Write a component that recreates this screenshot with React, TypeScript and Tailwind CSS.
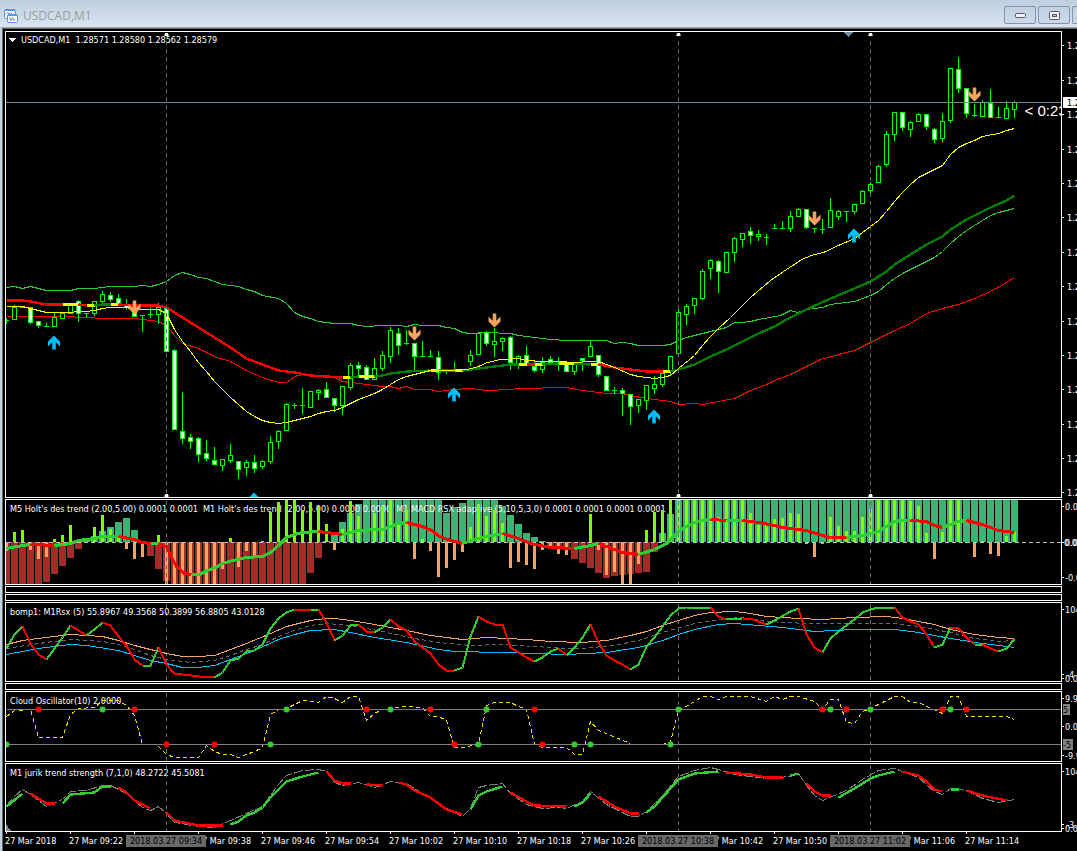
import type { ReactNode } from "react";

type Candle = ["h" | "b" | "d", number, number, number, number];
type Segment = [string, string];

const barX = (index: number) => 6 + index * 8;

const LIME = "#32cd32";
const RED = "#ff0000";
const YELLOW = "#ffff00";
const GREEN = "#008000";
const SKY = "#00bfff";
const SAND = "#f4a460";
const GRAY = "#808080";
const DIM = "#696969";

const GUIDES = [166, 678, 870];

// kind, body top, body bottom, high, low
const candles: Candle[] = [
  ["d", 320, 320, 318, 323], ["h", 307, 319, 305, 319], ["d", 307, 307, 307, 307], ["b", 307, 322, 307, 323],
  ["b", 321, 325, 321, 327], ["d", 326, 326, 323, 326], ["h", 317, 326, 312, 326], ["h", 313, 318, 313, 318],
  ["h", 304, 313, 304, 313], ["b", 301, 313, 300, 321], ["d", 313, 313, 313, 317], ["h", 301, 313, 301, 315],
  ["h", 294, 301, 291, 303], ["b", 295, 299, 292, 301], ["b", 298, 303, 294, 303], ["b", 304, 307, 299, 309],
  ["b", 309, 316, 309, 316], ["d", 315, 315, 315, 331], ["d", 314, 314, 307, 317], ["h", 307, 314, 303, 323],
  ["b", 308, 351, 308, 351], ["b", 350, 429, 349, 429], ["b", 431, 438, 392, 443], ["b", 437, 441, 434, 448],
  ["b", 438, 454, 437, 461], ["b", 453, 458, 440, 460], ["b", 460, 464, 447, 464], ["h", 459, 465, 459, 470],
  ["h", 455, 460, 444, 462], ["b", 461, 469, 461, 478], ["h", 462, 467, 460, 475], ["b", 462, 468, 455, 472],
  ["h", 461, 466, 460, 468], ["h", 442, 461, 436, 463], ["h", 431, 441, 430, 448], ["h", 404, 430, 403, 430],
  ["d", 405, 405, 403, 408], ["d", 405, 405, 388, 413], ["h", 391, 407, 391, 407], ["h", 390, 392, 389, 399],
  ["b", 389, 397, 382, 397], ["b", 398, 405, 398, 411], ["h", 386, 405, 386, 414], ["h", 365, 387, 363, 389],
  ["b", 365, 368, 362, 377], ["b", 367, 379, 365, 379], ["h", 368, 379, 358, 379], ["h", 355, 368, 351, 370],
  ["h", 330, 356, 327, 362], ["b", 333, 345, 328, 354], ["d", 343, 343, 330, 344], ["b", 343, 356, 343, 369],
  ["d", 356, 356, 341, 356], ["d", 356, 356, 350, 356], ["b", 357, 372, 351, 379], ["d", 371, 371, 370, 373],
  ["d", 369, 369, 362, 369], ["d", 369, 369, 369, 369], ["h", 355, 361, 350, 365], ["h", 333, 354, 333, 354],
  ["b", 332, 343, 331, 345], ["h", 341, 344, 328, 356], ["h", 338, 341, 337, 350], ["b", 337, 362, 336, 369],
  ["h", 356, 363, 355, 368], ["b", 355, 363, 346, 363], ["b", 366, 370, 361, 371], ["h", 362, 369, 357, 372],
  ["b", 359, 362, 356, 362], ["d", 362, 362, 357, 370], ["b", 363, 371, 363, 371], ["h", 364, 371, 364, 374],
  ["b", 358, 360, 358, 370], ["h", 346, 356, 340, 356], ["b", 355, 374, 355, 376], ["b", 376, 390, 376, 390],
  ["d", 390, 390, 387, 393], ["b", 390, 393, 388, 415], ["b", 394, 406, 394, 424], ["h", 399, 405, 399, 412],
  ["h", 385, 400, 385, 409], ["h", 384, 388, 376, 393], ["h", 373, 384, 373, 386], ["h", 356, 370, 356, 375],
  ["h", 312, 353, 305, 353], ["h", 306, 314, 304, 324], ["h", 298, 305, 298, 313], ["h", 271, 298, 269, 299],
  ["h", 260, 268, 259, 278], ["b", 261, 271, 260, 292], ["h", 252, 272, 252, 272], ["h", 238, 252, 237, 261],
  ["h", 233, 239, 233, 246], ["b", 231, 235, 227, 243], ["h", 234, 236, 230, 240], ["d", 237, 237, 234, 244],
  ["d", 228, 228, 224, 228], ["d", 228, 228, 221, 228], ["h", 216, 228, 211, 231], ["h", 209, 216, 208, 216],
  ["b", 209, 227, 209, 228], ["d", 228, 228, 228, 232], ["d", 229, 229, 219, 233], ["h", 210, 227, 198, 227],
  ["h", 211, 216, 210, 219], ["d", 211, 211, 211, 221], ["h", 204, 211, 204, 213], ["h", 191, 203, 190, 203],
  ["h", 184, 190, 182, 192], ["h", 166, 182, 165, 182], ["h", 134, 164, 131, 166], ["h", 112, 134, 112, 140],
  ["b", 112, 127, 112, 130], ["h", 122, 129, 121, 136], ["h", 114, 121, 113, 121], ["b", 114, 126, 114, 129],
  ["b", 129, 139, 128, 142], ["h", 121, 138, 113, 141], ["h", 68, 120, 68, 122], ["b", 69, 88, 57, 92],
  ["b", 88, 113, 88, 117], ["d", 115, 115, 104, 116], ["h", 102, 116, 100, 116], ["b", 103, 117, 89, 117],
  ["d", 117, 117, 107, 117], ["h", 108, 118, 101, 118], ["h", 102, 109, 101, 117],
];

const upperBand =
  "6,287 14,286 22,288 30,286 38,288 46,290 70,290 78,288 94,288 110,286 134,286 142,285 150,286 158,284 166,281 174,275 182,272 190,274 198,277 206,278 214,281 222,284 238,286 246,289 254,291 262,295 278,298 286,303 294,312 302,316 310,318 318,321 334,323 350,323 358,325 366,326 382,325 398,325 406,326 414,324 422,325 438,325 446,327 454,328 462,332 470,333 486,332 510,333 518,335 526,336 534,337 550,339 566,340 590,340 606,340 614,343 622,342 630,343 638,345 662,345 670,344 678,340 686,337 702,333 726,327 734,322 742,322 750,321 758,319 780,315 790,310 797,312 806,309 822,307 830,304 854,301 862,298 870,295 878,291 886,284 894,278 902,273 910,269 918,265 926,261 934,257 942,251 950,243 958,236 966,230 974,225 982,220 990,215 998,212 1006,210 1014,208";
const lowerBand =
  "6,316 30,316 46,316 70,316 78,317 110,318 134,318 150,320 158,321 166,325 174,335 182,343 198,348 214,356 230,361 246,370 262,377 278,382 286,382 294,376 302,374 310,375 334,377 342,381 358,383 366,384 382,386 390,386 398,388 406,386 414,389 430,389 438,391 454,389 470,388 486,390 510,389 518,388 566,387 582,390 598,392 606,393 622,393 630,395 646,398 670,401 678,404 694,403 702,404 718,401 734,398 750,390 766,384 774,380 790,374 806,366 820,359 838,354 854,350 870,342 886,334 894,330 910,323 918,318 926,313 942,308 958,304 974,298 990,291 1006,282 1014,277";
const fastAverage =
  "6,306 22,306 30,308 38,310 46,312 62,312 86,311 94,310 102,308 110,307 126,307 134,309 158,309 166,313 174,329 182,341 190,351 198,362 206,371 214,381 222,389 230,397 238,404 246,411 254,416 262,420 270,422 278,423 286,422 294,420 302,418 310,416 318,413 326,411 334,410 342,407 350,403 358,399 366,396 374,393 382,389 390,384 398,379 406,376 414,374 430,370 446,370 467,369 478,366 487,362 500,359 518,358 526,360 542,361 558,361 574,362 590,361 598,361 606,364 614,367 630,374 638,376 654,378 662,377 670,375 678,368 694,355 702,345 710,336 718,328 730,317 750,297 770,280 786,269 803,258 814,254 823,252 838,245 854,238 870,226 878,220 886,211 894,201 902,192 910,184 918,177 926,173 934,169 942,165 950,154 958,147 966,143 974,140 982,136 998,133 1006,130 1014,128";

const trend: Segment[] = [
  [RED, "6,300 22,300 30,301 46,304 62,304"],
  [YELLOW, "62,304 78,304"],
  [RED, "78,304 86,305"],
  [YELLOW, "86,305 94,305"],
  [GREEN, "94,305 102,304 110,304"],
  [YELLOW, "110,304 118,304"],
  [RED, "118,304 134,305 158,305 166,307 182,317 198,327 214,337 230,347 246,358 270,367 278,370 294,372 310,375 326,376 342,377"],
  [YELLOW, "342,377 350,377"],
  [GREEN, "350,377 358,376"],
  [YELLOW, "358,376 374,376"],
  [GREEN, "374,376 382,375 390,373 406,371 430,370"],
  [YELLOW, "430,370 438,370"],
  [RED, "438,370 454,370"],
  [YELLOW, "454,370 462,370"],
  [GREEN, "462,370 478,368 494,366 510,364 518,364"],
  [YELLOW, "518,364 526,364"],
  [RED, "526,364 534,364"],
  [YELLOW, "534,364 542,364"],
  [GREEN, "542,364 558,363"],
  [YELLOW, "558,363 574,363"],
  [GREEN, "574,363 590,364"],
  [YELLOW, "590,364 598,364"],
  [RED, "598,364 614,367 630,369 646,371 662,371"],
  [YELLOW, "662,371 670,371"],
  [GREEN, "670,371 678,369 694,364 710,356 726,349 742,341 758,333 774,326 786,319 806,309 830,298 854,288 870,281 886,271 894,264 910,254 926,244 942,236 950,229 966,219 990,207 1006,200 1014,195"],
];

const upSignals = [[54, 342], [454, 394], [654, 416], [854, 235], [254, 499]];
const downSignals = [[134, 307], [414, 333], [494, 320], [814, 218], [974, 94]];

const ZERO = 542;
const rep = (count: number, value: number): number[] => Array.from({ length: count }, () => value);

const wideBars: number[] = [
  584, 584, 584, 584, 584, 582, 574, 566, 558, 549, 541, 536, 531, 527, 522, 518, 530, 541, 556, 569, 581,
  ...rep(17, 584), 573, 558, 541, 534, 522, 513, 504, ...rep(10, 500), 513, 507, 503, ...rep(4, 500), 506, 515,
  524, 533, 537, 541, 547, 548, 550, 559, 563, 568, 573, 578, 576, 575, 574, 573, 572, 552, 533, 514, ...rep(43, 500),
];
const thinBars: number[] = [
  551, 532, 530, 550, 559, 557, 539, 535, 525, 542, 542, 527, 515, 529, 536, 549, 559, 557, 542, 535,
  ...rep(7, 584), 569, 538, 567, 551, 556, 541, 512, 502, 500, 500, 510, 502, 506, 524, 550, 529, 501, 516, 542,
  513, 506, 500, 523, 510, 559, 539, 551, 577, 568, 560, 552, 527, 504, 516, 510, 523, 568, 562, 565, 569, 550,
  547, 554, 555, 542, 542, 514, 550, 575, 572, 584, 584, 564, 530, 512, 510, 500, 500, 500, 500, 500, 500, 517,
  500, 500, 500, 513, 525, 523, 519, 518, 513, 514, 544, 557, 544, 517, 526, 531, 531, 517, 509, 500, 500, 500,
  500, 501, 506, 533, 559, 532, 500, 500, 543, 557, 541, 554, 556, 536, 531,
];

const holt: Segment[] = [
  [LIME, "6,548 22,545 30,544"],
  [RED, "30,544 54,545"],
  [LIME, "54,545 70,543 78,540 94,538 103,536 118,536"],
  [RED, "118,536 134,539 142,542 150,543"],
  [LIME, "150,543 158,543"],
  [RED, "158,543 166,546 170,555 176,566 184,573 191,574"],
  [LIME, "191,574 199,574 207,570 215,567 222,563 232,560 246,557 262,556 270,552 278,545 286,537 294,534 302,532 318,531"],
  [RED, "318,531 326,532 334,533 342,534"],
  [LIME, "342,534 358,530 382,529 398,523 406,522"],
  [RED, "406,522 422,526 431,530 439,536 447,539 462,543"],
  [LIME, "462,543 478,538 486,536 502,533"],
  [RED, "502,533 518,538 530,543 550,547 574,548"],
  [LIME, "574,548 590,545 598,543"],
  [RED, "598,543 614,549 622,552 638,554"],
  [LIME, "638,554 654,549 666,543 678,531 686,526 694,522 702,520 710,519"],
  [RED, "710,519 726,520"],
  [LIME, "726,520 742,520"],
  [RED, "742,520 758,522 774,525 782,527 798,529 806,530 822,535 830,537 846,537"],
  [LIME, "846,537 862,535 878,531 886,526 894,521 902,520 910,520"],
  [RED, "910,520 926,521 934,525 942,527"],
  [LIME, "942,527 950,524 958,521 966,520"],
  [RED, "966,520 982,524 998,530 1014,532"],
];

// Series below are keyed by bar index instead of pixel position.
const byBar = (points: string) =>
  points
    .split(" ")
    .map((point) => {
      const [index, y] = point.split(",").map(Number);
      return `${barX(index)},${y}`;
    })
    .join(" ");

const rsx: Segment[] = [
  [LIME, "0,648 1,634 2,626"],
  [RED, "2,626 3,643 4,654 5,659"],
  [LIME, "5,659 6,648 7,637 8,625"],
  [RED, "8,625 9,630 10,635"],
  [LIME, "10,635 11,629 12,622"],
  [RED, "12,622 13,625 14,636 15,645 16,659 17,665"],
  [LIME, "17,665 18,665 19,647"],
  [RED, "19,647 20,664 21,673 22,674 24,676 26,677"],
  [LIME, "26,677 27,672 28,660 29,658 30,651 31,650 32,644 33,628 34,618 35,612 36,609"],
  [RED, "36,609 38,609"],
  [LIME, "38,609 39,609"],
  [RED, "39,609 40,622 41,640"],
  [LIME, "41,640 42,635 43,625 44,624"],
  [RED, "44,624 45,631 46,632"],
  [LIME, "46,632 47,627 48,619"],
  [RED, "48,619 49,626 50,630 51,641 53,653 54,664 55,670 56,670"],
  [LIME, "56,670 57,667 58,636 59,616"],
  [RED, "59,616 60,621 61,624 62,624 63,647 64,652 65,657 66,661"],
  [LIME, "66,661 67,657 68,651 69,648"],
  [RED, "69,648 70,655"],
  [LIME, "70,655 71,647 72,637 73,624"],
  [RED, "73,624 74,642 75,655 76,660 77,664 78,669"],
  [LIME, "78,669 79,664 80,646 81,637 82,626 83,615 84,608 85,607 88,607"],
  [RED, "88,607 89,616 90,619"],
  [LIME, "90,619 92,618"],
  [RED, "92,618 93,618 94,621 95,624"],
  [LIME, "95,624 96,620 98,611 99,608"],
  [RED, "99,608 100,634 101,647 102,652"],
  [LIME, "102,652 103,638 104,631 105,625 106,619 107,612 108,609 109,607 111,607"],
  [RED, "111,607 112,617 113,621 114,624 115,634 116,647"],
  [LIME, "116,647 117,644 118,627"],
  [RED, "118,627 119,628 120,637 121,644"],
  [LIME, "121,644 122,644"],
  [RED, "122,644 123,648 124,651"],
  [LIME, "124,651 125,648 126,639"],
];
const rsxUpper =
  "0,644 2,640 4,638 8,634 12,636 14,640 16,645 20,653 22,656 24,656 26,655 28,649 30,643 33,633 35,626 38,620 40,618 41,618 43,620 46,624 50,630 53,635 57,639 60,637 65,639 68,641 72,642 75,640 78,635 80,631 82,625 84,620 86,615 88,612 91,611 93,613 95,616 99,618 102,619 106,617 110,616 112,618 114,621 116,624 118,629 121,634 124,637 126,638";
const rsxMiddle =
  "0,648 4,643 8,639 12,641 14,644 16,649 18,655 20,659 23,662 26,660 28,655 30,649 32,644 34,636 36,630 38,625 40,623 43,625 47,631 51,638 54,642 58,645 62,644 66,646 70,648 72,648 76,645 79,640 82,632 86,623 90,618 92,617 95,621 100,623 105,623 111,623 114,626 118,632 121,638 124,641 126,640";
const rsxLower =
  "0,654 4,648 8,644 10,645 14,650 16,655 18,660 20,663 22,667 24,667 26,665 28,659 31,650 34,639 36,634 38,630 41,629 43,632 46,637 50,642 54,649 56,651 62,652 66,653 70,654 75,652 79,647 82,640 84,634 86,629 89,624 91,623 94,625 97,627 101,631 106,629 111,629 114,632 118,638 122,643 126,647";

const cloud = [
  "0,716 1,710 3,709 4,737 7,737 8,714 9,708 11,707 12,700 14,700 15,705 16,715 17,744",
  "19,746 20,754 21,757 24,757 25,745 26,751 27,754 28,754 29,757 31,751 32,747 33,714 34,709 35,708 37,700 39,702 40,696 41,698 42,702 43,696 44,696 45,720 46,713 47,709 50,706 52,707 53,716 54,716 55,720 56,747 57,747 59,744 60,705 61,702 63,702 64,706 65,709 66,744 67,747 70,747 71,754 72,754 73,721 74,730 78,743",
  "82,744 83,742 84,709 85,706 87,696 88,696 89,699 90,696 93,696 95,701 96,696 97,699 98,696 99,696 101,701 102,709 103,699 104,699 105,722 106,723 107,711 108,708 110,700 111,696 112,696 113,702 114,702 117,713 118,696 119,696 120,716 125,716 126,719",
];
const cloudDots: [number, number, string][] = [
  [0, 744, LIME], [4, 709, RED], [12, 709, LIME], [16, 709, RED], [20, 744, RED], [26, 744, RED], [33, 744, LIME],
  [35, 709, LIME], [45, 709, RED], [48, 709, LIME], [53, 709, RED], [56, 744, RED], [59, 744, LIME], [60, 709, LIME],
  [66, 709, RED], [67, 744, RED], [71, 744, LIME], [73, 744, LIME], [83, 744, LIME], [84, 709, LIME], [102, 709, RED],
  [103, 709, LIME], [105, 709, RED], [108, 709, LIME], [117, 709, RED], [118, 709, LIME], [120, 709, RED],
];

const jurikRaw =
  "0,805 1,796 2,789 3,794 5,806 7,799 8,791 10,790 12,785 13,785 15,793 17,807 18,810 19,806 20,813 21,822 24,826 26,827 28,820 30,813 32,806 34,784 35,775 37,770 39,769 40,771 41,782 42,785 44,782 46,787 48,781 50,783 52,793 54,802 55,808 57,816 58,808 59,787 60,785 62,783 63,793 65,804 67,808 69,807 70,808 72,801 73,791 75,804 78,816 79,816 80,811 82,795 84,776 86,770 88,767 89,769 91,774 95,778 98,776 99,773 100,785 101,795 102,800 105,790 107,779 109,770 111,768 112,771 114,777 116,791 117,794 118,788 120,790 122,798 124,802 126,799";
const jurik: Segment[] = [
  [LIME, "0,806 2,793"],
  [RED, "3,793 5,803 6,803"],
  [LIME, "7,803 8,794 11,792 12,786 13,786"],
  [RED, "14,787 15,792 16,800 18,808"],
  [RED, "20,812 21,820 24,825 27,825"],
  [LIME, "28,824 29,821 30,815 31,812 32,807 33,797 35,781 37,776 39,772"],
  [RED, "40,771 41,780 42,783 43,783"],
  [RED, "45,784 47,785"],
  [RED, "49,782 50,784 51,790 53,797 55,809 57,814"],
  [LIME, "58,809 59,795 60,791 62,786"],
  [RED, "63,792 65,801 66,805 70,806"],
  [LIME, "71,806 72,802 73,793"],
  [RED, "74,796 76,806 78,813 79,813"],
  [LIME, "80,812 81,806 84,779 86,773 89,771"],
  [RED, "90,772 93,774 95,777 97,777"],
  [LIME, "98,775 99,773"],
  [RED, "100,783 101,791 102,795 103,795"],
  [LIME, "104,797 106,788 108,778 109,775 111,771"],
  [RED, "112,771 114,775 115,781 116,789 117,791"],
  [LIME, "118,789 119,789"],
  [RED, "120,790 122,795 125,800"],
];

const timeLabels = [
  "27 Mar 2018", "27 Mar 09:22", "", "27 Mar 09:38", "27 Mar 09:46", "27 Mar 09:54", "27 Mar 10:02", "27 Mar 10:10",
  "27 Mar 10:18", "27 Mar 10:26", "", "27 Mar 10:42", "27 Mar 10:50", "", "27 Mar 11:06", "27 Mar 11:14",
];

const priceTicks = [45, 80, 114, 149, 183, 217, 252, 286, 321, 355, 389, 424, 458, 492];

function Line({ points, color, width = 1, dash }: { points: string; color: string; width?: number; dash?: string }) {
  return <polyline points={points} fill="none" stroke={color} strokeWidth={width} strokeDasharray={dash} />;
}

function Guides({ from, to }: { from: number; to: number }) {
  return (
    <>
      {GUIDES.map((x) => (
        <Line key={x} points={`${x},${from} ${x},${to}`} color={DIM} dash="4 4" />
      ))}
    </>
  );
}

function Caption({ x, y, children }: { x: number; y: number; children: string }) {
  return (
    <text x={x - 0.5} y={y - 0.5} fill="#ffffff" xmlSpace="preserve">
      {children}
    </text>
  );
}

function Pane({
  top,
  height,
  axis,
  children,
}: {
  top: number;
  height: string;
  axis?: ReactNode;
  children?: ReactNode;
}) {
  return (
    <div className={`flex shrink-0 ${height}`}>
      <div className="min-w-0 flex-1 overflow-hidden border border-white">
        <svg className="block h-full w-full" shapeRendering="crispEdges">
          <g transform={`translate(-6 ${-top - 1})`}>
            <g transform="translate(0.5 0.5)">{children}</g>
          </g>
        </svg>
      </div>
      <svg className="block h-full w-[15px] shrink-0" shapeRendering="crispEdges">
        <g transform={`translate(-1062 ${-top})`}>{axis}</g>
      </svg>
    </div>
  );
}

function AxisLabel({ y, x = 1067, text }: { y: number; x?: number; text: string }) {
  return (
    <>
      <rect x={1062} y={y} width={2} height={1} fill="#ffffff" />
      <text x={x} y={y + 4} fill="#ffffff">
        {text}
      </text>
    </>
  );
}

function MarkedLabel({ y, text }: { y: number; text: string }) {
  return (
    <>
      <rect x={1063} y={y - 5} width={text.length > 1 ? 10 : 7} height={11} fill={GRAY} />
      <text x={1063} y={y + 4} fill="#000000">
        {text}
      </text>
    </>
  );
}

function CandleMark({ index, candle }: { index: number; candle: Candle }) {
  const [kind, top, bottom, high, low] = candle;
  const x = barX(index);
  const up = "#00ff00";
  return (
    <g transform="translate(-0.5 -0.5)">
      {high < top && <rect x={x} y={high} width={1} height={top - high} fill={up} />}
      {low > bottom && <rect x={x} y={bottom} width={1} height={low - bottom + 1} fill={up} />}
      <rect x={x - 2} y={top} width={5} height={bottom - top + 1} fill={up} />
      {kind !== "d" && (
        <rect
          x={x - 1}
          y={top + 1}
          width={3}
          height={Math.max(1, bottom - top - 1)}
          fill={kind === "b" ? "#ffffff" : "#000000"}
        />
      )}
    </g>
  );
}

function Arrow({ x, y, down = false }: { x: number; y: number; down?: boolean }) {
  return (
    <path
      transform={down ? `translate(${x} ${y}) rotate(180)` : `translate(${x - 0.5} ${y})`}
      shapeRendering="auto"
      fill={down ? SAND : SKY}
      d="M0-7 6-1V4L1.8-.2V7h-3.6V-.2L-6 4V-1Z"
    />
  );
}

function Handle({ x, y }: { x: number; y: number }) {
  return (
    <>
      <rect x={x - 2.5} y={y - 0.5} width={5} height={2} fill={GRAY} />
      <rect x={x - 1.5} y={y - 1.5} width={3} height={3} fill="#ffffff" />
    </>
  );
}

function PricePane() {
  return (
    <Pane
      top={31}
      height="h-[467px]"
      axis={
        <>
          {priceTicks.map((y) => (
            <AxisLabel key={y} y={y} text="1.2" />
          ))}
          <rect x={1063} y={97} width={14} height={11} fill="#ffffff" />
          <text x={1067} y={106} fill="#000000">
            1.2
          </text>
        </>
      }
    >
      <Caption x={21} y={43}>
        USDCAD,M1  1.28571 1.28580 1.28562 1.28579
      </Caption>
      <path d="M8 37.500h8l-4 4.500Z" fill="#ffffff" />
      <path d="M843.500 31.500h9l-4.500 5Z" fill="#778899" />
      <Line points={upperBand} color={LIME} />
      <Line points={lowerBand} color={RED} />
      {candles.map((candle, index) => (
        <CandleMark key={index} index={index} candle={candle} />
      ))}
      {trend.map(([color, points], index) => (
        <Line key={index} points={points} color={color} width={2.4} />
      ))}
      <Line points={fastAverage} color={YELLOW} />
      <Guides from={32} to={497} />
      <Line points="5,102 2400,102" color="#778899" />
      {GUIDES.map((x) => (
        <g key={x}>
          <Handle x={x} y={34} />
          <Handle x={x} y={495} />
        </g>
      ))}
      {upSignals.map(([x, y]) => (
        <Arrow key={x} x={x} y={y} />
      ))}
      {downSignals.map(([x, y]) => (
        <Arrow key={x} x={x} y={y} down />
      ))}
      <text x={1024} y={115} fill="#ffffff" className="font-['Liberation_Sans',sans-serif] text-[15px]">
        {"< 0:23"}
      </text>
    </Pane>
  );
}

function MacdPane() {
  return (
    <Pane
      top={499}
      height="h-[86px]"
      axis={
        <>
          <AxisLabel y={506} x={1065} text="0.0" />
          <AxisLabel y={542} x={1064} text="0.0" />
          <text x={1065} y={546} fill="#ffffff">
            0.0
          </text>
          <AxisLabel y={577} x={1065} text="-0.0" />
        </>
      }
    >
      <g transform="translate(-0.5 -0.5)">
        {wideBars.map((y, index) => (
          <rect
            key={index}
            x={barX(index) - 3}
            y={Math.min(y, ZERO)}
            width={7}
            height={Math.abs(y - ZERO)}
            fill={y < ZERO ? "#3cb371" : "#a52a2a"}
          />
        ))}
      </g>
      <Caption x={10} y={512}>
        M5 Holt's des trend (2.00,5.00) 0.0001 0.0001  M1 Holt's des trend (2.00,5.00) 0.0000 0.0000  M1 MACD RSX adaptive (5,10,5,3,0) 0.0001 0.0001 0.0001 0.0001
      </Caption>
      <g transform="translate(-0.5 -0.5)">
        {thinBars.map((y, index) => (
          <rect
            key={index}
            x={barX(index) - 1}
            y={Math.min(y, ZERO)}
            width={3}
            height={Math.abs(y - ZERO)}
            fill={y < ZERO ? "#7fff00" : SAND}
          />
        ))}
      </g>
      <Guides from={500} to={584} />
      <Line points="6,542 2400,542" color="#c0c0c0" dash="4 3" />
      {holt.map(([color, points], index) => (
        <Line key={index} points={points} color={color} width={3} />
      ))}
    </Pane>
  );
}

function RsxPane() {
  return (
    <Pane
      top={602}
      height="h-[80px]"
      axis={
        <>
          <AxisLabel y={609} x={1065} text="104" />
          <AxisLabel y={674} x={1066} text="-4" />
          <AxisLabel y={678} x={1065} text="0.0" />
        </>
      }
    >
      <Guides from={603} to={681} />
      <Line points={byBar(rsxMiddle)} color={DIM} dash="4 3" />
      <Line points={byBar(rsxUpper)} color={SAND} />
      <Line points={byBar(rsxLower)} color={SKY} />
      {rsx.map(([color, points], index) => (
        <Line key={index} points={byBar(points)} color={color} width={2} />
      ))}
      <Caption x={10} y={615}>
        bomp1: M1Rsx (5) 55.8967 49.3568 50.3899 56.8805 43.0128
      </Caption>
    </Pane>
  );
}

function CloudPane() {
  return (
    <Pane
      top={691}
      height="h-[71px]"
      axis={
        <>
          <AxisLabel y={698} x={1065} text="9.9" />
          <MarkedLabel y={709} text="5" />
          <AxisLabel y={726} x={1065} text="0.0" />
          <MarkedLabel y={744} text="-5" />
          <AxisLabel y={755} x={1065} text="-9.9" />
        </>
      }
    >
      <Caption x={10} y={704}>
        Cloud Oscillator(10) 2.0000
      </Caption>
      <Guides from={692} to={761} />
      {cloud.map((points) => (
        <Line key={points} points={byBar(points)} color="#ffd700" dash="4 3" />
      ))}
      <Line points="6,709 2400,709" color={GRAY} />
      <Line points="6,744 2400,744" color={GRAY} />
      {cloudDots.map(([index, y, color]) => (
        <circle key={`${index}-${y}`} cx={barX(index)} cy={y} r={3} fill={color} shapeRendering="auto" />
      ))}
    </Pane>
  );
}

function JurikPane() {
  return (
    <Pane
      top={763}
      height="h-[69px]"
      axis={
        <>
          <AxisLabel y={771} x={1065} text="104" />
          <AxisLabel y={824} x={1066} text="-3." />
          <AxisLabel y={828} x={1065} text="0.0" />
        </>
      }
    >
      <Caption x={10} y={776}>
        M1 jurik trend strength (7,1,0) 48.2722 45.5081
      </Caption>
      <Guides from={764} to={831} />
      <Line points={byBar(jurikRaw)} color={GRAY} dash="9 2" />
      {jurik.map(([color, points], index) => (
        <Line key={index} points={byBar(points)} color={color} width={2.4} />
      ))}
      <path d="M5.500 824v7.500h6Z" fill="#778899" />
    </Pane>
  );
}

function TimeAxis() {
  return (
    <div className="relative h-[19px] shrink-0 overflow-hidden text-white">
      <ol className="flex">
        {timeLabels.map((label, index) => (
          <li key={index} className="w-16 shrink-0">
            <div className="ml-px h-0.5 w-px bg-white" />
            <span className="block leading-[14px] whitespace-pre">{label}</span>
          </li>
        ))}
      </ol>
      <span className="absolute top-[3px] left-[121px] w-20 bg-[#696969] text-center leading-[12px] whitespace-nowrap text-black">
        2018.03.27 09:34
      </span>
      <span className="absolute top-[3px] left-[633px] w-20 bg-[#696969] text-center leading-[12px] whitespace-nowrap text-black">
        2018.03.27 10:38
      </span>
      <span className="absolute top-[3px] left-[825px] w-20 bg-[#696969] text-center leading-[12px] whitespace-nowrap text-black">
        2018.03.27 11:02
      </span>
    </div>
  );
}

function ChartIcon() {
  return (
    <svg width="14" height="14" viewBox="0 0 14 14" className="shrink-0" aria-hidden="true">
      <rect x=".5" y=".5" width="11" height="9" rx="1" fill="#ffffff" stroke="#5b94dc" />
      <path d="M1 1.500h10" stroke="#5b94dc" />
      <path d="m2 5 1.500-1.500L5 5l1.500-1.500L8 5" fill="none" stroke="#5b94dc" />
      <rect x="3.500" y="5.500" width="10" height="8" rx="1" fill="#ffffff" stroke="#5b94dc" />
      <path d="M4 6.500h9" stroke="#5b94dc" />
      <path d="m5.500 8.500 1.500 3 1.500-3 1.500 3 1.500-1" fill="none" stroke="#5b94dc" />
    </svg>
  );
}

function TitleBar() {
  const frame =
    "flex h-[18px] items-center justify-center border border-[#8494b0] bg-linear-to-b from-[#c3d2e3] to-[#cbd9e8]";
  return (
    <header className="flex h-[27px] shrink-0 items-start bg-linear-to-b from-[#c0cfdd] to-[#d8e5f2]">
      <div className="flex min-w-0 flex-1 items-center gap-[5px] pt-[7px] pl-1">
        <ChartIcon />
        <h1 className="truncate font-['Open_Sans','Noto_Sans',sans-serif] text-[12px] leading-[18px] text-[#999da2]">
          USDCAD,M1
        </h1>
      </div>
      <div className="flex shrink-0 gap-0.5 pt-1.5">
        <button type="button" aria-label="Minimize" className={`${frame} w-8 rounded-xs`}>
          <svg width="11" height="5" viewBox="0 0 11 5">
            <rect x=".5" y=".5" width="10" height="4" rx="1" fill="#f4f4f4" stroke="#54546c" />
          </svg>
        </button>
        <button type="button" aria-label="Restore" className={`${frame} w-8 rounded-xs`}>
          <svg width="11" height="9" viewBox="0 0 11 9">
            <rect x=".5" y=".5" width="10" height="8" rx="1" fill="#f4f4f4" stroke="#54546c" />
            <rect x="3.500" y="3.500" width="4" height="2" fill="#b8c8dc" stroke="#54546c" />
          </svg>
        </button>
        <button type="button" aria-label="Close" className={`${frame} w-[5px] rounded-l-xs border-r-0`} />
      </div>
    </header>
  );
}

export default function App() {
  return (
    <div className="flex min-h-screen flex-col overflow-hidden bg-black font-['DejaVu_Sans_Condensed','Noto_Sans',sans-serif] text-[9px]">
      <TitleBar />
      <main className="flex flex-1 flex-col border-t border-l-2 border-t-[#a0a0a0] border-l-[#c4d3e2]">
        <div className="flex flex-1 flex-col gap-px border-t border-l border-[#696969] pt-0.5 pl-0.5">
          <PricePane />
          <MacdPane />
          <Pane top={586} height="h-[7px]" />
          <Pane top={594} height="h-[7px]" />
          <RsxPane />
          <Pane top={683} height="h-[7px]" />
          <CloudPane />
          <div className="flex flex-col">
            <JurikPane />
            <TimeAxis />
          </div>
        </div>
      </main>
    </div>
  );
}
